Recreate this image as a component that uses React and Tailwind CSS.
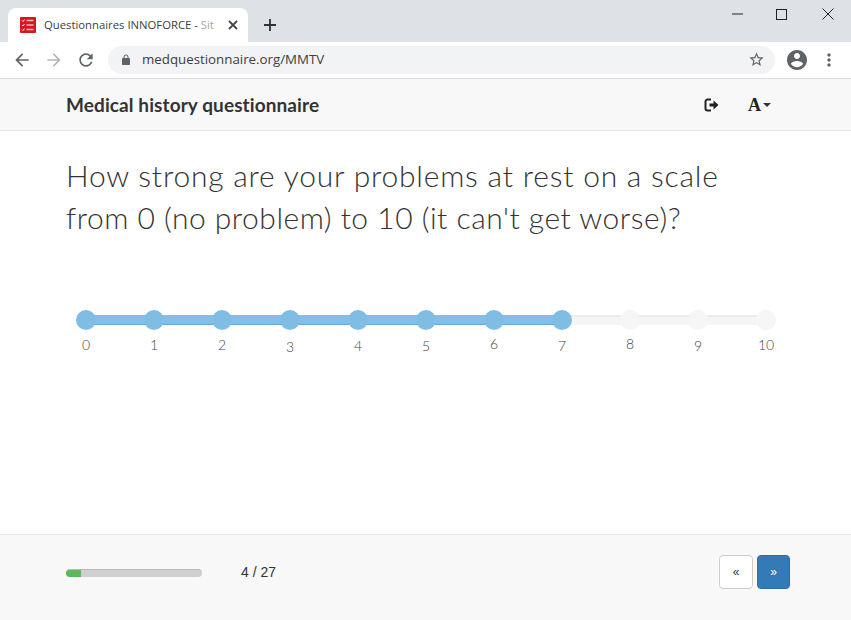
import React from 'react';

const GLYPHS = {
  back: 'M20 11H7.83l5.59-5.59L12 4l-8 8 8 8 1.41-1.41L7.83 13H20v-2z',
  reload: 'M17.65 6.35C16.2 4.9 14.21 4 12 4c-4.42 0-7.99 3.58-7.99 8s3.57 8 7.99 8c3.73 0 6.84-2.55 7.73-6h-2.08c-.82 2.33-3.04 4-5.65 4-3.31 0-6-2.69-6-6s2.69-6 6-6c1.66 0 3.14.69 4.22 1.78L13 11h7V4l-2.35 2.35z',
  lock: 'M18 8h-1V6c0-2.76-2.24-5-5-5S7 3.24 7 6v2H6c-1.1 0-2 .9-2 2v10c0 1.1.9 2 2 2h12c1.1 0 2-.9 2-2V10c0-1.1-.9-2-2-2zM9 6c0-1.66 1.34-3 3-3s3 1.34 3 3v2H9V6z',
  star: 'M22 9.24l-7.19-.62L12 2 9.19 8.63 2 9.24l5.46 4.73L5.82 21 12 17.27 18.18 21l-1.63-7.03L22 9.24zM12 15.4l-3.76 2.27 1-4.28-3.32-2.88 4.38-.38L12 6.1l1.71 4.04 4.38.38-3.32 2.88 1 4.28L12 15.4z',
  account: 'M12 2C6.48 2 2 6.48 2 12s4.48 10 10 10 10-4.48 10-10S17.52 2 12 2zm0 3c1.66 0 3 1.34 3 3s-1.34 3-3 3-3-1.34-3-3 1.34-3 3-3zm0 14.2c-2.5 0-4.71-1.28-6-3.22.03-1.99 4-3.08 6-3.08 1.99 0 5.97 1.09 6 3.08-1.29 1.94-3.5 3.22-6 3.22z',
  dots: 'M12 8c1.1 0 2-.9 2-2s-.9-2-2-2-2 .9-2 2 .9 2 2 2zm0 2c-1.1 0-2 .9-2 2s.9 2 2 2 2-.9 2-2-.9-2-2-2zm0 6c-1.1 0-2 .9-2 2s.9 2 2 2 2-.9 2-2-.9-2-2-2z',
};

function Glyph({ name, size = 24, className = '' }) {
  return (
    <svg width={size} height={size} viewBox="0 0 24 24" fill="currentColor" className={className}>
      <path d={GLYPHS[name]} />
    </svg>
  );
}

function Favicon() {
  return (
    <svg width="16" height="16" viewBox="0 0 16 16" className="shrink-0">
      <rect width="16" height="16" rx="1" fill="#d5181e" />
      <path d="M2 3.5l1 1 1.5-2M2 8l1 1 1.5-2M2 12.5l1 1 1.5-2" stroke="#fff" strokeWidth="0.9" fill="none" />
      <path d="M6.5 3.5h7M6.5 8h7M6.5 12.5h7" stroke="#f6b9ba" strokeWidth="1.6" />
    </svg>
  );
}

function TabStrip() {
  return (
    <div className="h-[42px] bg-[#dee1e6] flex items-end pl-2 relative">
      <div className="w-[240px] h-[34px] bg-white rounded-t-lg flex items-center pl-3 pr-[10px]">
        <Favicon />
        <span className="ml-2 whitespace-nowrap text-[11.3px] text-[#3c4043] font-['Open_Sans',sans-serif]">
          Questionnaires INNOFORCE - <span className="text-[#a5a7a9]">Sit</span>
        </span>
        <svg width="10" height="10" viewBox="0 0 10 10" className="ml-auto text-[#45474a]">
          <path d="M1 1l8 8M9 1l-8 8" stroke="currentColor" strokeWidth="1.8" />
        </svg>
      </div>
      <svg width="12" height="12" viewBox="0 0 12 12" className="ml-4 mb-[11px] text-[#303235]">
        <path d="M6 0v12M0 6h12" stroke="currentColor" strokeWidth="1.8" />
      </svg>
      <div className="ml-auto self-start flex items-center h-7 text-[#222]">
        <svg width="11" height="2" viewBox="0 0 11 2" className="mr-[33px]"><path d="M0 1h11" stroke="currentColor" /></svg>
        <svg width="11" height="11" viewBox="0 0 11 11" className="mr-[35px]"><rect x="0.5" y="0.5" width="10" height="10" fill="none" stroke="currentColor" /></svg>
        <svg width="12" height="12" viewBox="0 0 12 12" className="mr-[17px]"><path d="M.5.5l11 11M11.5.5l-11 11" stroke="currentColor" /></svg>
      </div>
    </div>
  );
}

function Toolbar() {
  return (
    <div className="h-[37px] bg-white border-b border-[#dadce0] flex items-center pb-[1px]">
      <Glyph name="back" size={20} className="ml-3 text-[#5f6368]" />
      <Glyph name="back" size={20} className="ml-3 text-[#b4b6b9] rotate-180" />
      <Glyph name="reload" size={20} className="ml-3 text-[#5f6368]" />
      <div className="ml-3 w-[667px] h-7 rounded-full bg-[#f1f3f4] flex items-center pl-3 pr-[10px]">
        <Glyph name="lock" size={12} className="text-[#5f6368]" />
        <span className="ml-[10px] text-[13.3px] text-[#3c4043] font-['Open_Sans',sans-serif]">medquestionnaire.org/MMTV</span>
        <Glyph name="star" size={17} className="ml-auto text-[#5f6368]" />
      </div>
      <Glyph name="account" size={24} className="ml-[10px] text-[#5f6368]" />
      <Glyph name="dots" size={20} className="ml-[10px] text-[#5f6368]" />
    </div>
  );
}

function NavBar() {
  return (
    <div className="h-[52px] bg-[#f8f8f8] border-b border-[#e7e7e7] flex items-center pl-[66px]">
      <span className="text-[19px] font-bold text-[#333] tracking-[0.1px] translate-y-[1px]">Medical history questionnaire</span>
      <svg width="16" height="14" viewBox="0 0 16 14" className="ml-auto text-[#222]">
        <path d="M7 1.5H3.5a2 2 0 0 0-2 2v7a2 2 0 0 0 2 2H7" fill="none" stroke="currentColor" strokeWidth="2" />
        <path d="M5.5 5.5h4V2.5l5 4.5-5 4.5v-3h-4z" fill="currentColor" />
      </svg>
      <span className="ml-[28px] text-lg font-bold text-[#222] font-['Liberation_Serif',serif]">A</span>
      <span className="ml-[2px] mr-[80px] border-x-4 border-x-transparent border-t-4 border-t-[#333]" />
    </div>
  );
}

// labels sit a little up or down like the old style figures in the picture
const STEPS = [
  { label: '0', cls: '' },
  { label: '1', cls: '' },
  { label: '2', cls: '' },
  { label: '3', cls: 'translate-y-[2px]' },
  { label: '4', cls: 'translate-y-[1px]' },
  { label: '5', cls: 'translate-y-[1px]' },
  { label: '6', cls: '-translate-y-[1px]' },
  { label: '7', cls: 'translate-y-[1px]' },
  { label: '8', cls: '-translate-y-[1px]' },
  { label: '9', cls: 'translate-y-[1px]' },
  { label: '10', cls: '' },
];

function Slider() {
  return (
    <div className="relative w-[700px] ml-[10px] mt-[72px]">
      <div className="absolute left-[10px] right-[10px] top-[5px] h-[10px] bg-[#f5f5f5] border-t-2 border-[#ececec]" />
      <div className="absolute left-[10px] w-[476px] top-[5px] h-[10px] bg-[#82bee5] border-b border-[#6da9d2]" />
      <div className="relative flex justify-between">
        {STEPS.map((s, i) => (
          <div key={s.label} className="w-5 flex flex-col items-center">
            <div className={i <= 7 ? 'size-5 rounded-full bg-[#80bde4]' : 'size-5 rounded-full bg-[#f6f6f6]'} />
            <span className={`mt-[5px] text-sm leading-[20px] text-[#444] font-light font-['Lato',sans-serif] ${s.cls}`}>{s.label}</span>
          </div>
        ))}
      </div>
    </div>
  );
}

function Footer() {
  return (
    <div className="h-[86px] bg-[#f8f8f8] border-t border-[#e7e7e7] flex items-center pl-[66px] pb-[11px]">
      <div className="w-[136px] h-2 mt-[1px] rounded-[4px] bg-[#cfcfcf] border-t border-[#b9b9b9] overflow-hidden">
        <div className="w-[15px] h-full bg-[#5cb85c]" />
      </div>
      <span className="ml-[39px] text-sm text-[#333] font-['Liberation_Sans',sans-serif]">4 / 27</span>
      <button className="ml-auto size-[34px] bg-white border border-[#ccc] rounded text-[#333] text-xs font-['Liberation_Sans',sans-serif]">«</button>
      <button className="ml-1 mr-[61px] w-[33px] h-[34px] bg-[#337ab7] border border-[#2e6da4] rounded text-white text-xs font-['Liberation_Sans',sans-serif]">»</button>
    </div>
  );
}

export default function App() {
  return (
    <div className="w-[851px] h-[620px] flex flex-col overflow-hidden bg-white font-['Lato',sans-serif]">
      <TabStrip />
      <Toolbar />
      <NavBar />
      <div className="flex-1 pl-[66px] pt-[23px]">
        <h1 className="text-[30px] leading-[42px] font-light text-[#333]">
          <span className="block tracking-[0.78px]">How strong are your problems at rest on a scale</span>
          <span className="block tracking-[0.5px]">from 0 (no problem) to 10 (it can't get worse)?</span>
        </h1>
        <Slider />
      </div>
      <Footer />
    </div>
  );
}
